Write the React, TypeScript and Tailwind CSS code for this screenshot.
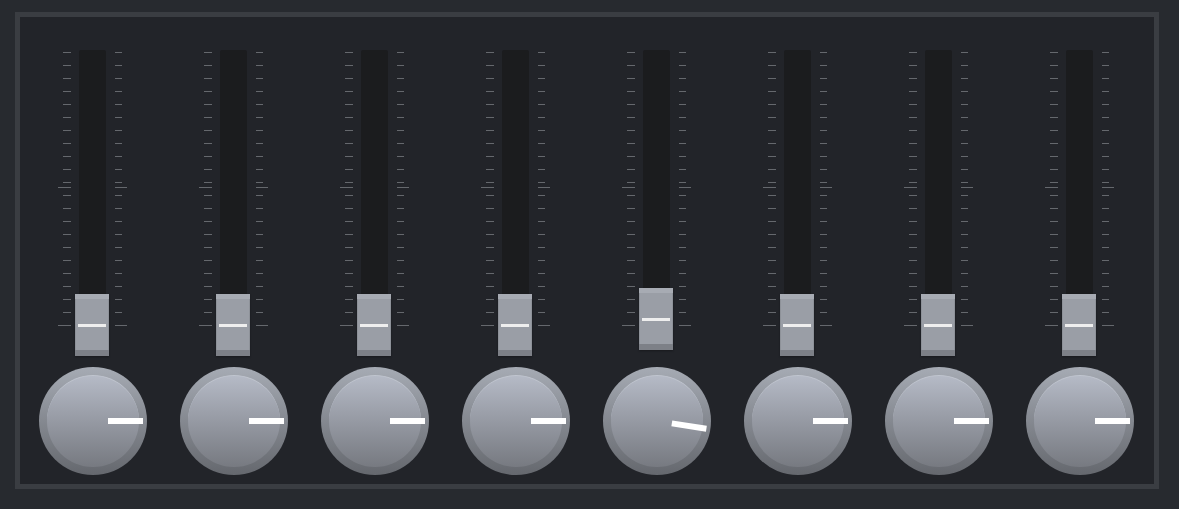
const channels = [
  { fader: 244, angle: 0 },
  { fader: 244, angle: 0 },
  { fader: 244, angle: 0 },
  { fader: 244, angle: 0 },
  { fader: 238, angle: 9 },
  { fader: 244, angle: 0 },
  { fader: 244, angle: 0 },
  { fader: 244, angle: 0 },
]

const TickColumn = ({ side }: { side: 'left' | 'right' }) => (
  <div
    className={
      'flex flex-col gap-[12px] pt-[2px] ' +
      (side === 'left' ? 'w-[8px] mr-[8px]' : 'w-[7px] ml-[9px]')
    }
  >
    {Array.from({ length: 21 }).map((_, i) => (
      <div key={i} className="h-px w-full bg-[#65686d]" />
    ))}
  </div>
)

const Channel = ({ fader, angle }: { fader: number; angle: number }) => {
  return (
    <div className="flex w-[141px] flex-col items-center">
      <div className="relative flex h-[306px] w-full justify-center">
        <TickColumn side="left" />
        <div className="h-[296px] w-[27px] rounded-t-[2px] bg-[#1b1c1e]" />
        <TickColumn side="right" />

        {/* long marks */}
        <div className="absolute left-[36px] top-[137px] h-px w-[13px] bg-[#65686d]" />
        <div className="absolute left-[93px] top-[137px] h-px w-[12px] bg-[#65686d]" />
        <div className="absolute left-[36px] top-[275px] h-px w-[13px] bg-[#65686d]" />
        <div className="absolute left-[93px] top-[275px] h-px w-[12px] bg-[#65686d]" />

        {/* fader cap */}
        <div
          className="absolute left-[53px] flex h-[62px] w-[34px] flex-col bg-[#9a9ea6] shadow-[0_1px_2px_rgba(0,0,0,0.3)]"
          style={{ top: fader }}
        >
          <div className="h-[5px] w-full bg-[#a7abb3]" />
          <div className="flex flex-1 flex-col border-x border-[#8e9299] px-[2px]">
            <div className="h-[25px]" />
            <div className="h-[3px] w-full bg-[#eeeeee]" />
          </div>
          <div className="h-[6px] w-full bg-[#7d8087]" />
        </div>
      </div>

      {/* knob */}
      <div className="relative mt-[11px] flex h-[108px] w-[108px] items-center justify-center rounded-full bg-linear-to-b from-[#a6abb4] to-[#65686e]">
        <div className="mb-[1px] h-[92px] w-[92px] rounded-full border-t border-[#c0c5cf] bg-linear-to-b from-[#b5bac6] to-[#777a81]" />
        <div
          className="absolute inset-0"
          style={{ transform: `rotate(${angle}deg)` }}
        >
          <div className="absolute left-[69px] top-[51px] h-[6px] w-[35px] bg-white" />
        </div>
      </div>
    </div>
  )
}

const App = () => {
  return (
    <div className="h-[509px] w-[1179px] bg-[#272a2f] pl-[15px] pt-[12px]">
      <div className="h-[477px] w-[1144px] border-[5px] border-[#3a3d42] bg-[#222429]">
        <div className="flex pl-[2px] pt-[33px]">
          {channels.map((ch, i) => (
            <Channel key={i} fader={ch.fader} angle={ch.angle} />
          ))}
        </div>
      </div>
    </div>
  )
}

export default App
